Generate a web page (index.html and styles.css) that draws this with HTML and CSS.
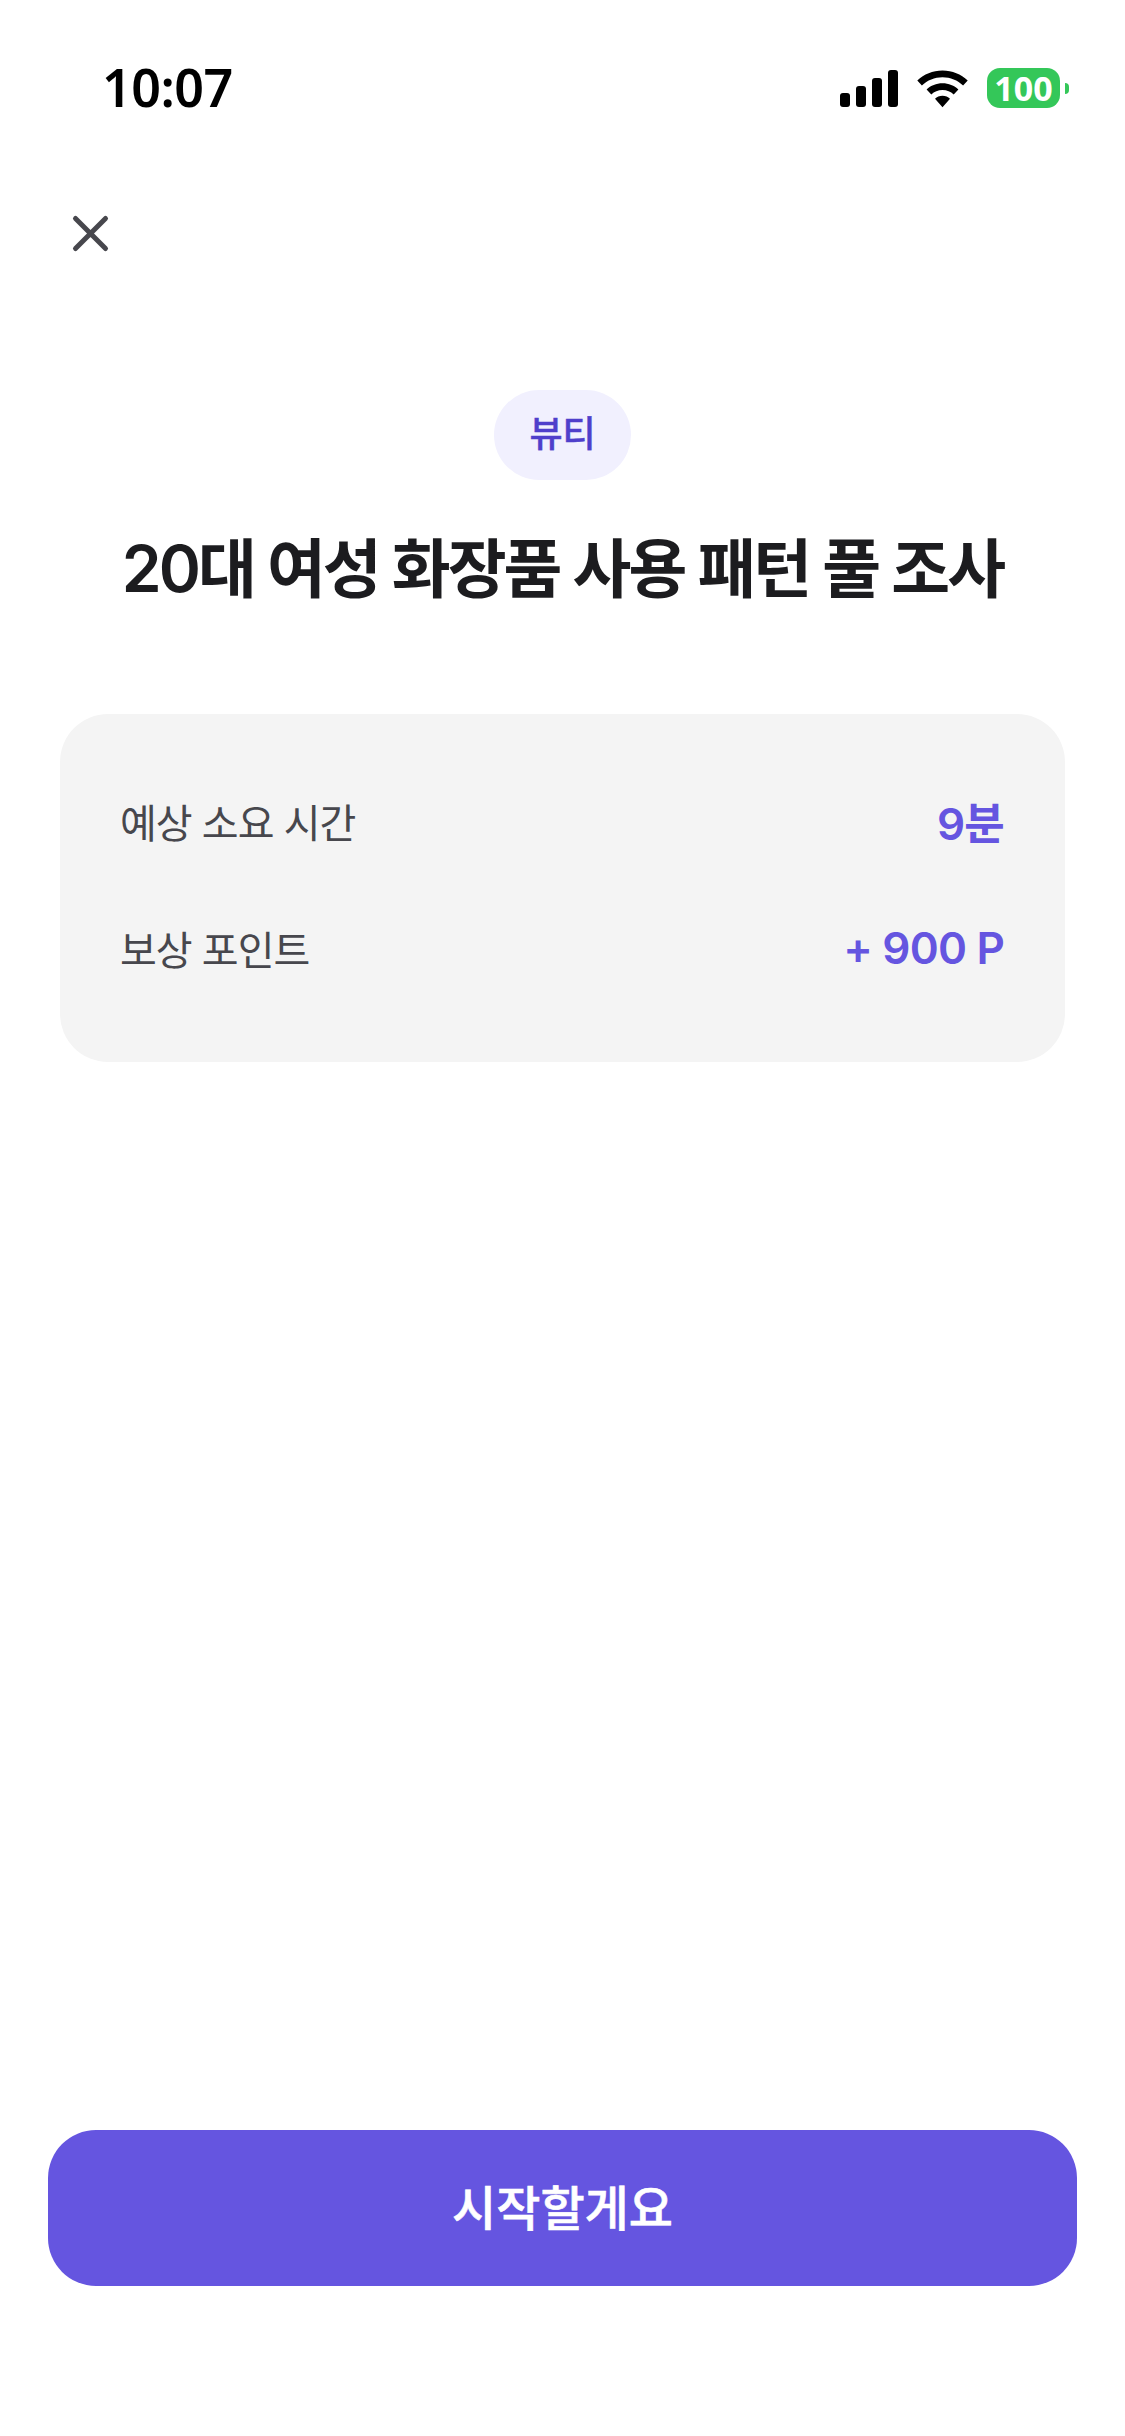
FILE: index.html
```html
<!DOCTYPE html>
<html lang="ko">
<head>
<meta charset="utf-8">
<title>설문 시작</title>
<link rel="stylesheet" href="styles.css">
</head>
<body>
<div class="screen">
  <div class="status">
    <span class="time">10:07</span>
    <div class="status-icons">
      <svg class="signal" width="58" height="37" viewBox="0 0 58 37"><rect x="0" y="23" width="10" height="14" rx="3"/><rect x="16" y="16" width="10" height="21" rx="3"/><rect x="32" y="8" width="10" height="29" rx="3"/><rect x="48" y="0" width="10" height="37" rx="3"/></svg>
      <svg class="wifi" width="51" height="38" viewBox="0 0 51 37"><path d="M25.5 0C15.6 0 7 3.8 0.3 10l4.6 5C10.4 9.9 17.600 6.800 25.500 6.800S40.600 9.900 46.100 15l4.600-5C44 3.800 35.400 0 25.500 0Z"/><path d="M25.500 12.700c-6.200 0-11.700 2.300-15.900 6.200l4.700 5c2.900-2.700 6.800-4.300 11.200-4.300s8.300 1.600 11.200 4.300l4.700-5c-4.200-3.900-9.700-6.200-15.900-6.200Z"/><path d="M25.500 25.300c-3 0-5.600 1.100-7.500 2.900l7.500 8.500 7.500-8.500c-1.900-1.800-4.500-2.900-7.500-2.900Z"/></svg>
      <div class="battery"><span class="battery-body">100</span><span class="battery-tip"></span></div>
    </div>
  </div>
  <div class="topbar">
    <svg class="close" width="42" height="42" viewBox="0 0 42 42"><path d="M5.500 5.500 35.500 35.500M35.500 5.500 5.500 35.500" fill="none" stroke="#47474d" stroke-width="5" stroke-linecap="round"/></svg>
  </div>
  <main class="content">
    <div class="hero">
      <span class="pill">뷰티</span>
      <h1 class="title">20대 여성 화장품 사용 패턴 풀 조사</h1>
    </div>
    <section class="card">
      <div class="row"><span class="label">예상 소요 시간</span><span class="value">9분</span></div>
      <div class="row"><span class="label">보상 포인트</span><span class="value">+ 900 P</span></div>
    </section>
  </main>
  <div class="footer"><button class="cta" type="button">시작할게요</button></div>
</div>
</body>
</html>
```
FILE: styles.css
```css
* { box-sizing: border-box; }
html, body { margin: 0; padding: 0; background: #fff; }
body { font-family: Inter, "Noto Sans CJK KR", sans-serif; }
.screen { width: 1125px; height: 2436px; display: flex; flex-direction: column; background: #fff; }
.status { height: 130px; padding: 44px 0 0 102px; display: flex; justify-content: space-between; align-items: flex-start; flex: none; }
.time { font-size: 52px; line-height: 88px; height: 88px; margin-top: -1px; font-weight: 600; color: #000; font-family: "Noto Sans", Inter, sans-serif; letter-spacing: -0.5px; }
.status-icons { display: flex; align-items: flex-end; margin-right: 56px; margin-top: 24px; height: 40px; }
.signal { margin: 0 0 1px 0; fill: #000; }
.wifi { margin: 0 0 0 19px; fill: #000; }
.battery { display: flex; align-items: center; margin-left: 19px; }
.battery-body { width: 73px; height: 40px; border-radius: 13px; background: #34c759; color: #fff; font-family: "Noto Sans", sans-serif; font-weight: 700; font-size: 34px; line-height: 40px; text-align: center; }
.battery-tip { width: 4px; height: 11px; margin-left: 5px; border-radius: 0 4px 4px 0; background: #34c759; }
.topbar { height: 130px; padding: 83px 0 0 70px; flex: none; }
.close { display: block; }
.content { flex: 1; display: flex; flex-direction: column; padding: 130px 60px 0; }
.hero { display: flex; flex-direction: column; align-items: center; }
.pill { width: 137px; height: 90px; border-radius: 45px; background: #f1f0fe; color: #4f3fcb; font-size: 36px; line-height: 88px; font-weight: 500; -webkit-text-stroke: 0.4px #4f3fcb; text-align: center; }
.title { margin: 44px 0 0; font-size: 64px; line-height: 90px; font-weight: 600; color: #1c1c1f; letter-spacing: -3px; text-align: center; white-space: nowrap; }
.card { margin-top: 100px; width: 1005px; height: 348px; padding: 57px 60px 0; border-radius: 48px; background: #f4f4f4; display: flex; flex-direction: column; gap: 27px; }
.row { height: 100px; display: flex; justify-content: space-between; align-items: center; }
.label { font-size: 40px; color: #47474d; font-weight: 400; letter-spacing: -1px; }
.value { font-size: 44px; color: #6555e0; font-weight: 600; letter-spacing: -0.800px; margin-right: 1px; }
.footer { padding: 0 48px 150px; flex: none; }
.cta { display: block; width: 1029px; height: 156px; padding: 0 0 6px; border: 0; border-radius: 48px; background: #6555e0; color: #fff; font-family: inherit; font-size: 48px; font-weight: 500; -webkit-text-stroke: 0.6px #fff; }
```
